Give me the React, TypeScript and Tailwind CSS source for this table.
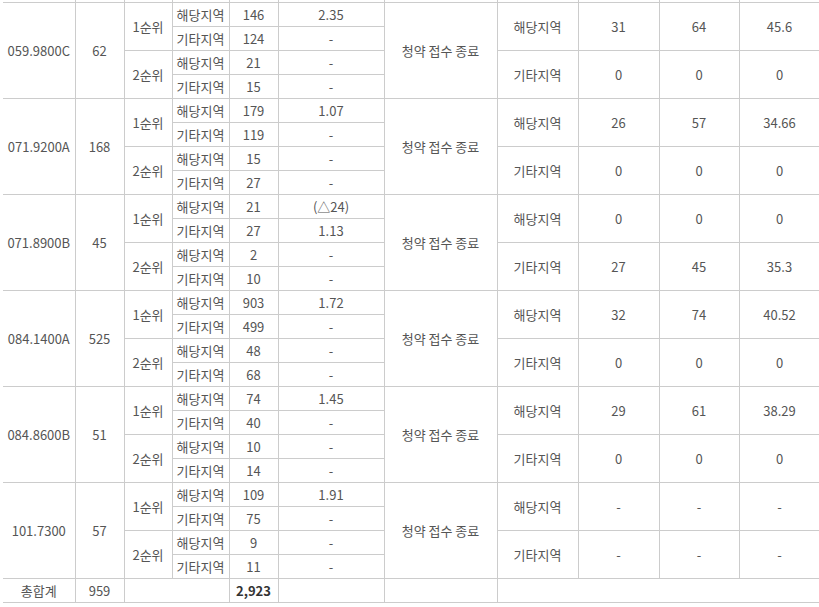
const groups = [
  {
    type: "059.9800C",
    supply: "62",
    sub: [
      ["146", "2.35"],
      ["124", "-"],
      ["21", "-"],
      ["15", "-"],
    ],
    local: ["31", "64", "45.6"],
    other: ["0", "0", "0"],
  },
  {
    type: "071.9200A",
    supply: "168",
    sub: [
      ["179", "1.07"],
      ["119", "-"],
      ["15", "-"],
      ["27", "-"],
    ],
    local: ["26", "57", "34.66"],
    other: ["0", "0", "0"],
  },
  {
    type: "071.8900B",
    supply: "45",
    sub: [
      ["21", "(△24)"],
      ["27", "1.13"],
      ["2", "-"],
      ["10", "-"],
    ],
    local: ["0", "0", "0"],
    other: ["27", "45", "35.3"],
  },
  {
    type: "084.1400A",
    supply: "525",
    sub: [
      ["903", "1.72"],
      ["499", "-"],
      ["48", "-"],
      ["68", "-"],
    ],
    local: ["32", "74", "40.52"],
    other: ["0", "0", "0"],
  },
  {
    type: "084.8600B",
    supply: "51",
    sub: [
      ["74", "1.45"],
      ["40", "-"],
      ["10", "-"],
      ["14", "-"],
    ],
    local: ["29", "61", "38.29"],
    other: ["0", "0", "0"],
  },
  {
    type: "101.7300",
    supply: "57",
    sub: [
      ["109", "1.91"],
      ["75", "-"],
      ["9", "-"],
      ["11", "-"],
    ],
    local: ["-", "-", "-"],
    other: ["-", "-", "-"],
  },
];

const td = "border border-[#cccccc] p-0 h-[24px] text-center align-middle";

export default function App() {
  return (
    <div
      className="w-[819px] h-[607px] overflow-hidden bg-white pl-[3px]"
      style={{ fontFamily: '"Noto Sans CJK KR", "Noto Sans", sans-serif' }}
    >
      <table className="table-fixed border-collapse w-[817px] text-[13px] leading-none text-[#555555]">
        <colgroup>
          <col className="w-[72px]" />
          <col className="w-[49px]" />
          <col className="w-[48px]" />
          <col className="w-[57px]" />
          <col className="w-[49px]" />
          <col className="w-[106px]" />
          <col className="w-[113px]" />
          <col className="w-[81px]" />
          <col className="w-[81px]" />
          <col className="w-[80px]" />
          <col className="w-[81px]" />
        </colgroup>
        <tbody>
          {/* tail of the row above */}
          <tr>
            {Array.from({ length: 11 }).map((_, i) => (
              <td
                key={i}
                className={`border-x border-[#cccccc] p-0 h-[2px] ${i === 0 ? "border-l-0" : ""}`}
              />
            ))}
          </tr>
          {groups.map((g) =>
            g.sub.map((s, i) => (
              <tr key={g.type + i}>
                {i === 0 && (
                  <>
                    <td rowSpan={4} className={`${td} border-l-0`}>
                      {g.type}
                    </td>
                    <td rowSpan={4} className={td}>
                      {g.supply}
                    </td>
                  </>
                )}
                {i % 2 === 0 && (
                  <td rowSpan={2} className={td}>
                    {i === 0 ? "1순위" : "2순위"}
                  </td>
                )}
                <td className={td}>{i % 2 === 0 ? "해당지역" : "기타지역"}</td>
                <td className={td}>{s[0]}</td>
                <td className={td}>{s[1]}</td>
                {i === 0 && (
                  <td rowSpan={4} className={td}>
                    청약 접수 종료
                  </td>
                )}
                {i % 2 === 0 && (
                  <>
                    <td rowSpan={2} className={td}>
                      {i === 0 ? "해당지역" : "기타지역"}
                    </td>
                    {(i === 0 ? g.local : g.other).map((v, k) => (
                      <td key={k} rowSpan={2} className={td}>
                        {v}
                      </td>
                    ))}
                  </>
                )}
              </tr>
            ))
          )}
          <tr>
            <td className={`${td} border-l-0`}>총합계</td>
            <td className={td}>959</td>
            <td colSpan={2} className={td}></td>
            <td className={`${td} font-bold text-[#333333]`}>2,923</td>
            <td className={td}></td>
            <td className={td}></td>
            <td colSpan={4} className={td}></td>
          </tr>
        </tbody>
      </table>
    </div>
  );
}
